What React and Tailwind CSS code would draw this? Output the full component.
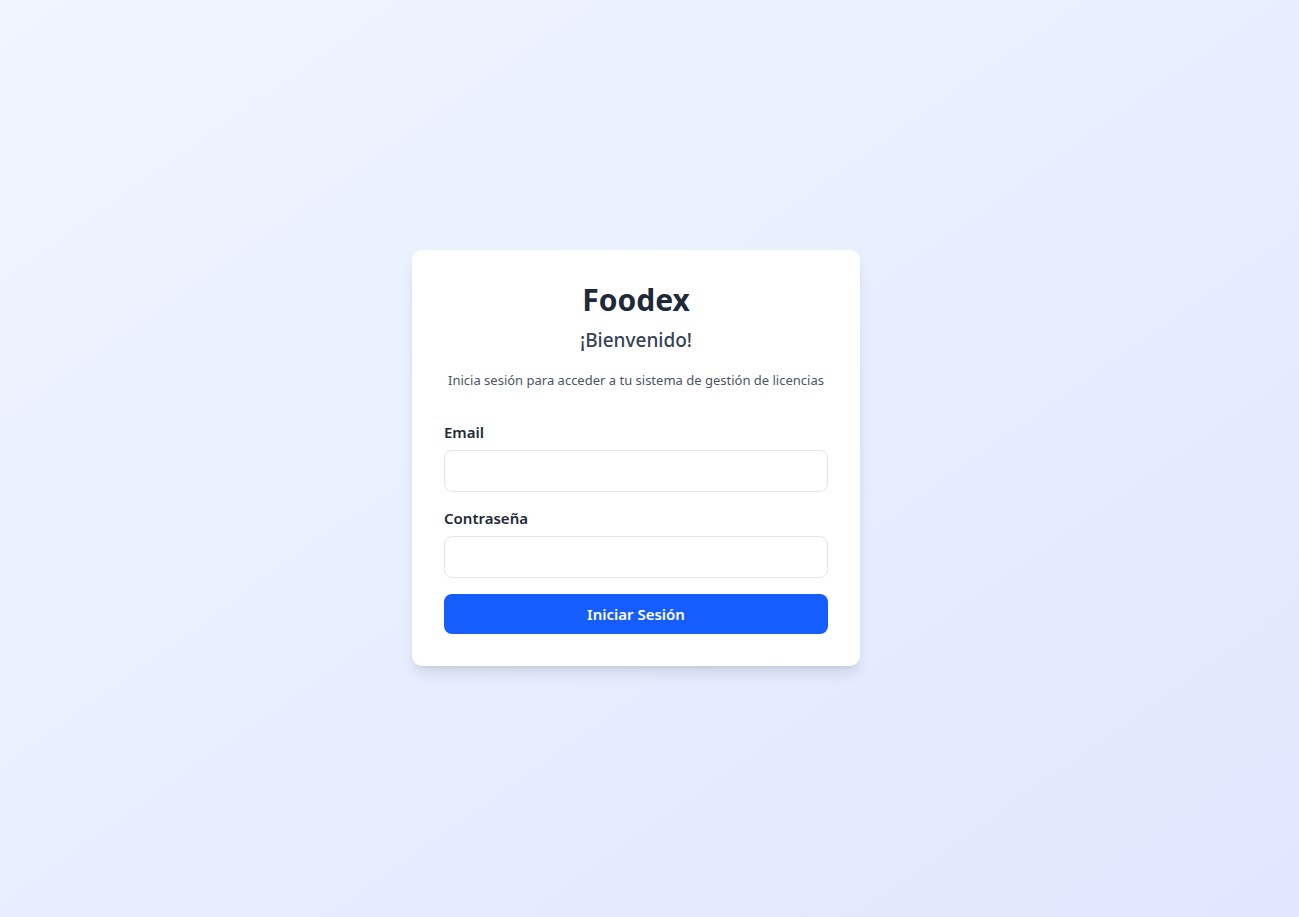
import { useState } from 'react'

export default function App() {
  const [email, setEmail] = useState('')
  const [password, setPassword] = useState('')

  const handleSubmit = (e) => {
    e.preventDefault()
  }

  return (
    <div className="flex min-h-screen items-center justify-center bg-gradient-to-br from-blue-50 to-indigo-100 pr-[27px] pb-[2px] font-['Noto_Sans',sans-serif]">
      <div className="w-full max-w-md rounded-[10px] bg-white p-8 shadow-lg">
        <div className="mb-8 text-center">
          <h1 className="text-3xl font-bold text-gray-800">Foodex</h1>
          <h2 className="mt-2 text-[19px] leading-7 font-medium text-gray-700">¡Bienvenido!</h2>
          <p className="mt-4 text-[13px] leading-5 text-gray-600">
            Inicia sesión para acceder a tu sistema de gestión de licencias
          </p>
        </div>

        <form onSubmit={handleSubmit} className="space-y-4">
          <div>
            <label htmlFor="email" className="mb-2 block text-[15px] leading-5 font-semibold text-gray-800">
              Email
            </label>
            <input
              id="email"
              type="email"
              value={email}
              onChange={(e) => setEmail(e.target.value)}
              className="block w-full rounded-lg border border-gray-200 px-3 py-2.5 text-sm leading-5 outline-none focus:ring-2 focus:ring-blue-500"
            />
          </div>
          <div>
            <label htmlFor="password" className="mb-2 block text-[15px] leading-5 font-semibold text-gray-800">
              Contraseña
            </label>
            <input
              id="password"
              type="password"
              value={password}
              onChange={(e) => setPassword(e.target.value)}
              className="block w-full rounded-lg border border-gray-200 px-3 py-2.5 text-sm leading-5 outline-none focus:ring-2 focus:ring-blue-500"
            />
          </div>
          <button
            type="submit"
            className="w-full rounded-lg bg-blue-600 py-2.5 text-[15px] font-semibold leading-5 text-white hover:bg-blue-700"
          >
            Iniciar Sesión
          </button>
        </form>
      </div>
    </div>
  )
}
